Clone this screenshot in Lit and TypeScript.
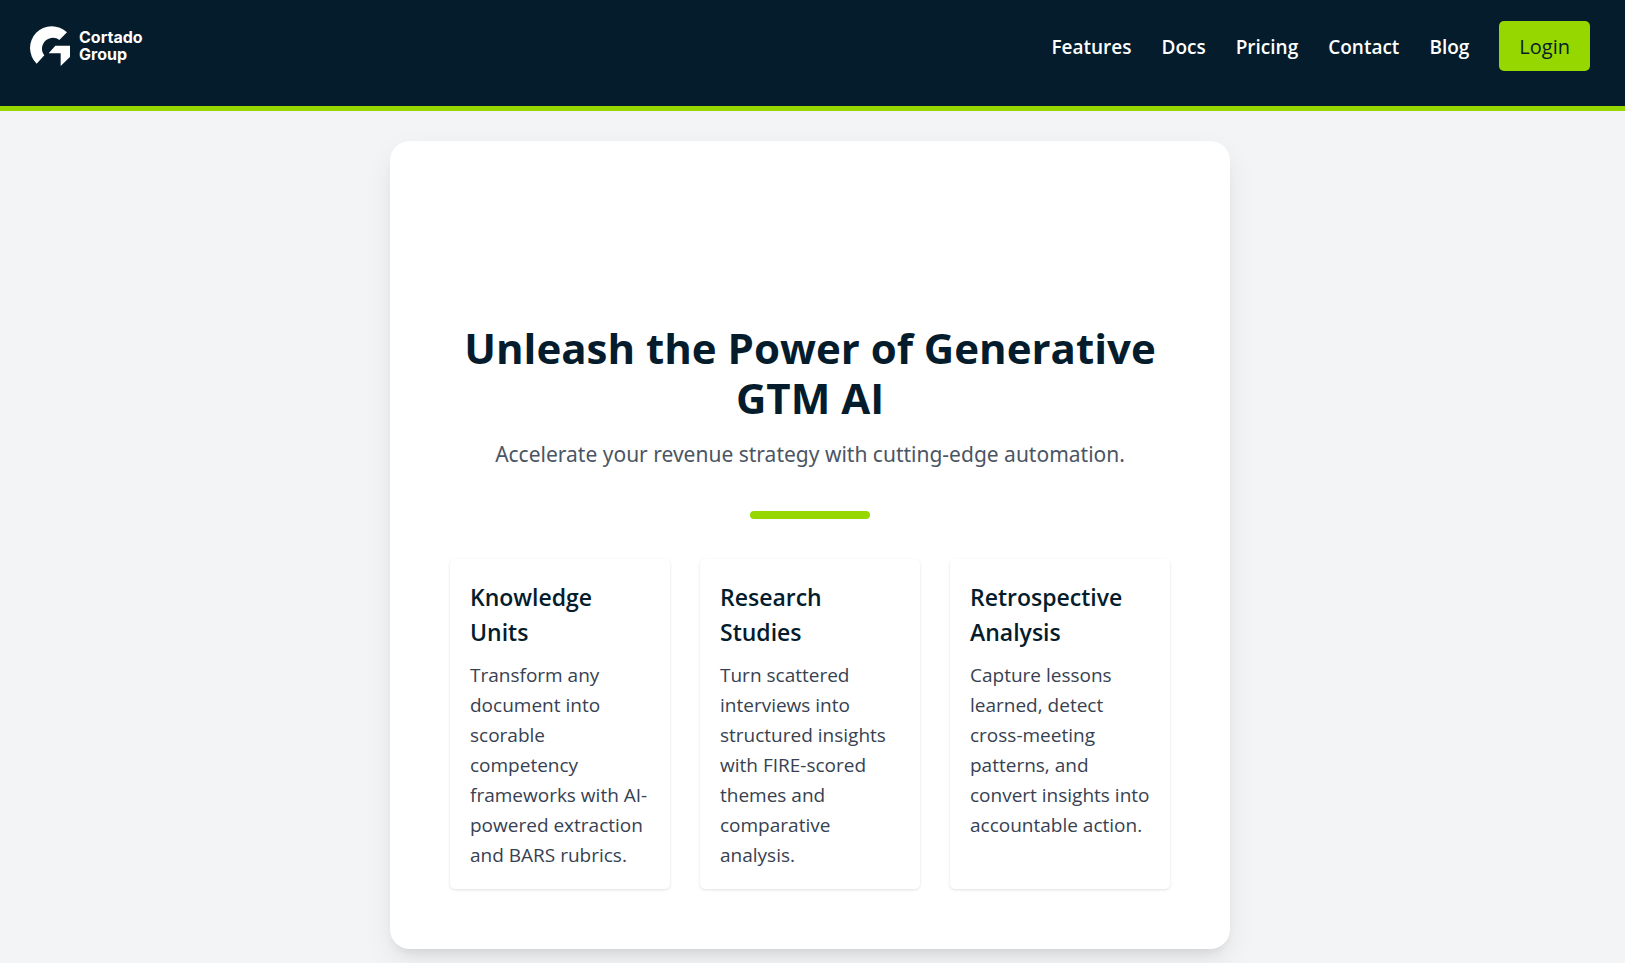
import { LitElement, html, css } from "lit";
import { customElement } from "lit/decorators.js";

const links = ["Features", "Docs", "Pricing", "Contact", "Blog"];

const features = [
  {
    title: "Knowledge Units",
    text: "Transform any document into scorable competency frameworks with AI-powered extraction and BARS rubrics.",
  },
  {
    title: "Research Studies",
    text: "Turn scattered interviews into structured insights with FIRE-scored themes and comparative analysis.",
  },
  {
    title: "Retrospective Analysis",
    text: "Capture lessons learned, detect cross-meeting patterns, and convert insights into accountable action.",
  },
];

@customElement("app-root")
export class AppRoot extends LitElement {
  static styles = css`
    :host {
      display: block;
      box-sizing: border-box;
      min-height: 100vh;
      background: #f3f4f6;
      color: #051c2c;
      font-family: "Segoe UI", "Open Sans", "Noto Sans", sans-serif;
      font-size: 19px;
      line-height: 30px;
    }
    * {
      box-sizing: border-box;
    }
    .header {
      display: flex;
      justify-content: space-between;
      align-items: flex-start;
      padding: 21px 35px 35px 30px;
      background: #051c2c;
      border-bottom: 5px solid #97d700;
    }
    .brand {
      display: flex;
      align-items: center;
      gap: 9px;
      height: 50px;
      color: #fff;
      text-decoration: none;
      font-family: Inter, "Open Sans", sans-serif;
      font-size: 16px;
      font-weight: 700;
      line-height: 17px;
    }
    .word {
      display: block;
    }
    .mark {
      width: 40px;
      height: 40px;
      fill: #fff;
    }
    .nav {
      display: flex;
      align-items: center;
      gap: 30px;
    }
    .link {
      padding-top: 2px;
      color: #fff;
      font-weight: 600;
      text-decoration: none;
    }
    .login {
      padding: 11px 20px 9px;
      border: 0;
      border-radius: 5px;
      background: #97d700;
      color: #051c2c;
      font: inherit;
      font-size: 20px;
      font-weight: 500;
      cursor: pointer;
    }
    .main {
      display: flex;
      justify-content: center;
      padding: 30px 35px 30px 30px;
    }
    .hero {
      width: 100%;
      max-width: 840px;
      padding: 60px;
      border-radius: 20px;
      background: #fff;
      box-shadow: 0 12px 30px -2px rgba(0, 0, 0, 0.08), 0 8px 12px -6px rgba(0, 0, 0, 0.1);
    }
    .media {
      height: 122px;
    }
    .title {
      margin: 0 0 14px;
      font-size: 42px;
      font-weight: 700;
      line-height: 50px;
      text-align: center;
    }
    .subtitle {
      margin: 0;
      color: #4b5563;
      font-family: "Segoe UI", "Noto Sans", sans-serif;
      font-size: 21px;
      line-height: 35px;
      text-align: center;
    }
    .rule {
      width: 120px;
      height: 8px;
      margin: 39px auto 40px;
      border: 0;
      border-radius: 4px;
      background: #97d700;
    }
    .features {
      display: grid;
      grid-template-columns: repeat(3, minmax(0, 1fr));
      gap: 30px;
    }
    .feature {
      padding: 21px 20px 19px;
      border-radius: 5px;
      box-shadow: 0 1px 3px rgba(0, 0, 0, 0.12);
    }
    .name {
      margin: 0 0 10px;
      font-size: 23px;
      font-weight: 600;
      line-height: 35px;
    }
    .text {
      margin: 0;
      color: #374151;
    }
  `;

  render() {
    return html`
      <header class="header">
        <a class="brand" href="#">
          <svg class="mark" viewBox="0 0 120 120" aria-hidden="true">
            <path d="M111 19A62 62 0 1 0 20 113L43 88C32 74 34 55 48 43C60 33 77 33 88 42Z" />
            <path d="M76 59H120V93L92 120V82H56Z" />
          </svg>
          <span>
            <span class="word">Cortado</span>
            <span class="word">Group</span>
          </span>
        </a>
        <nav class="nav">
          ${links.map((l) => html`<a class="link" href="#">${l}</a>`)}
          <button class="login" type="button">Login</button>
        </nav>
      </header>
      <main class="main">
        <section class="hero">
          <div class="media"></div>
          <h1 class="title">Unleash the Power of Generative GTM AI</h1>
          <p class="subtitle">Accelerate your revenue strategy with cutting-edge automation.</p>
          <hr class="rule" />
          <div class="features">
            ${features.map(
              (f) => html`
                <article class="feature">
                  <h2 class="name">${f.title}</h2>
                  <p class="text">${f.text}</p>
                </article>
              `
            )}
          </div>
        </section>
      </main>
    `;
  }
}
